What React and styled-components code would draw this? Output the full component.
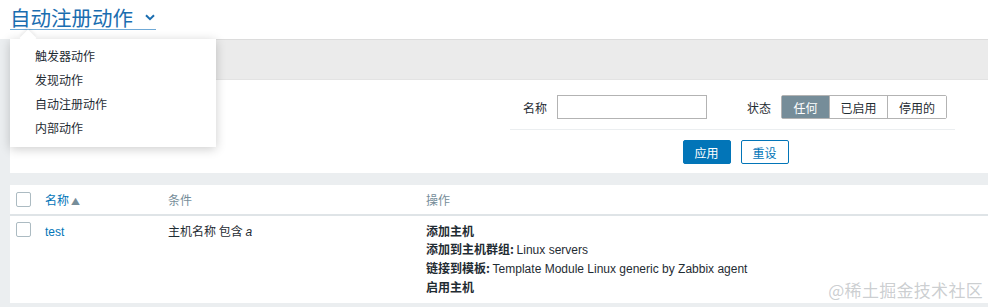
import React from "react";
import styled, { createGlobalStyle } from "styled-components";

const GlobalStyle = createGlobalStyle`
  html, body {
    margin: 0;
    padding: 0;
    background: #ebeef0;
    font-family: "Liberation Sans", Arial, "Noto Sans CJK SC", sans-serif;
    font-size: 12px;
    color: #1f2c33;
  }
`;

const Page = styled.div`
  width: 988px;
  height: 307px;
  overflow: hidden;
  position: relative;
`;

const Header = styled.header`
  position: relative;
  height: 39px;
  background: #fff;
  padding-left: 10px;
  display: flex;
  align-items: flex-start;
`;

const TitleLink = styled.div`
  margin-top: 6px;
  display: flex;
  align-items: center;
  gap: 12px;
  color: #1a6db0;
  font-family: "Noto Sans CJK SC", sans-serif;
  font-size: 20.5px;
  line-height: 22px;
  padding-bottom: 1px;
  border-bottom: 1px solid #6fa9d6;
`;

const Chevron = styled.svg`
  width: 10px;
  height: 7px;
  margin-right: 1px;
`;

const Menu = styled.ul`
  position: absolute;
  top: 39px;
  left: 10px;
  z-index: 5;
  width: 206px;
  margin: 0;
  padding: 5px 0 7px;
  list-style: none;
  background: #fff;
  box-shadow: 0 2px 10px rgba(0, 0, 0, 0.2);

  &::before {
    content: "";
    position: absolute;
    top: -7px;
    left: 12px;
    width: 12px;
    height: 12px;
    background: #fff;
    transform: rotate(45deg);
    box-shadow: -2px -2px 3px rgba(0, 0, 0, 0.06);
  }
`;

const MenuItem = styled.li`
  position: relative;
  padding-left: 25px;
  height: 24px;
  line-height: 24px;
  font-family: "Noto Sans CJK SC", sans-serif;
  font-size: 12px;
  color: #1f2c33;
`;

const Main = styled.main`
  padding-left: 10px;
`;

const Filter = styled.section`
  background: #fff;
`;

const FilterTabs = styled.div`
  height: 39px;
  background: #ebebeb;
  border-top: 1px solid #dcdcdc;
  border-bottom: 1px solid #e3e3e3;
`;

const FilterBody = styled.div`
  height: 93px;
  display: flex;
  flex-direction: column;
  align-items: center;
  padding-left: 500px;
  padding-right: 33px;
`;

const FilterRow = styled.div`
  align-self: stretch;
  display: flex;
  align-items: center;
  padding: 15px 0 10px 13px;
  border-bottom: 1px solid #ebeef0;
`;

const Label = styled.span`
  font-family: "Noto Sans CJK SC", sans-serif;
  font-size: 12px;
  margin-right: 10px;
  margin-left: ${(p) => p.$gap || 0}px;
`;

const TextInput = styled.input`
  box-sizing: border-box;
  width: 150px;
  height: 24px;
  border: 1px solid #b3b3b3;
  padding: 0 5px;
  margin: 0;
`;

const Segments = styled.div`
  display: flex;
  border: 1px solid #b3b3b3;
  border-radius: 2px;
  height: 22px;
`;

const Segment = styled.span`
  display: flex;
  align-items: center;
  justify-content: center;
  width: ${(p) => p.$w}px;
  font-family: "Noto Sans CJK SC", sans-serif;
  font-size: 12px;
  background: ${(p) => (p.$active ? "#768d99" : "#fff")};
  color: ${(p) => (p.$active ? "#fff" : "#1f2c33")};
  & + & {
    border-left: 1px solid #b3b3b3;
  }
`;

const Buttons = styled.div`
  display: flex;
  gap: 10px;
  margin-top: 10px;
  margin-left: 6px;
`;

const Button = styled.button`
  box-sizing: border-box;
  width: 48px;
  height: 24px;
  border-radius: 2px;
  font-family: "Noto Sans CJK SC", sans-serif;
  font-size: 12px;
  padding: 0;
  border: 1px solid #0275b8;
  background: ${(p) => (p.$primary ? "#0275b8" : "#fff")};
  color: ${(p) => (p.$primary ? "#fff" : "#0275b8")};
`;

const Table = styled.table`
  width: 100%;
  margin-top: 12px;
  background: #fff;
  border-collapse: collapse;
`;

const HeadCell = styled.th`
  height: 30px;
  padding: 0;
  padding-left: ${(p) => p.$pl || 0}px;
  width: ${(p) => p.$w || "auto"};
  text-align: left;
  font-weight: normal;
  font-family: "Noto Sans CJK SC", sans-serif;
  font-size: 12px;
  color: ${(p) => (p.$link ? "#0275b8" : "#768d99")};
  border-bottom: 2px solid #dfe4e7;
  box-sizing: border-box;
`;

const Cell = styled.td`
  vertical-align: top;
  padding: 6px 0 7px ${(p) => p.$pl || 0}px;
  line-height: 18px;
  border-bottom: 1px solid #ebeef0;
  font-family: "Noto Sans CJK SC", sans-serif;
  font-size: 12px;
`;

const Check = styled.span`
  display: block;
  box-sizing: border-box;
  width: 15px;
  height: 15px;
  border: 1px solid #acbbc2;
  border-radius: 2px;
  background: #fff;
  margin-top: ${(p) => p.$mt || 0}px;
`;

const Arrow = styled.span`
  font-size: 9px;
  color: #768d99;
  margin-left: 2px;
`;

const Link = styled.span`
  color: #0275b8;
  font-family: "Liberation Sans", Arial, sans-serif;
`;

const Latin = styled.span`
  font-family: "Liberation Sans", Arial, sans-serif;
  font-style: ${(p) => (p.$italic ? "italic" : "normal")};
`;

const OpLine = styled.div`
  b {
    font-weight: bold;
  }
`;

const Watermark = styled.div`
  position: absolute;
  right: 5px;
  bottom: 5px;
  font-family: "Noto Sans CJK SC", sans-serif;
  font-size: 17px;
  color: rgba(160, 165, 170, 0.55);
  letter-spacing: 0.3px;
`;

const menuItems = ["触发器动作", "发现动作", "自动注册动作", "内部动作"];

export default function App() {
  return (
    <Page>
      <GlobalStyle />
      <Header>
        <TitleLink>
          自动注册动作
          <Chevron viewBox="0 0 10 7">
            <path d="M1 1.2 L5 5.2 L9 1.2" fill="none" stroke="#1a6db0" strokeWidth="2" />
          </Chevron>
        </TitleLink>
        <Menu>
          {menuItems.map((m) => (
            <MenuItem key={m}>{m}</MenuItem>
          ))}
        </Menu>
      </Header>
      <Main>
        <Filter>
          <FilterTabs />
          <FilterBody>
            <FilterRow>
              <Label>名称</Label>
              <TextInput />
              <Label $gap={40}>状态</Label>
              <Segments>
                <Segment $w={47} $active>任何</Segment>
                <Segment $w={57}>已启用</Segment>
                <Segment $w={58}>停用的</Segment>
              </Segments>
            </FilterRow>
            <Buttons>
              <Button $primary>应用</Button>
              <Button>重设</Button>
            </Buttons>
          </FilterBody>
        </Filter>
        <Table>
          <thead>
            <tr>
              <HeadCell $w="35px" $pl={6}>
                <Check />
              </HeadCell>
              <HeadCell $w="123px" $link>
                名称<Arrow>▲</Arrow>
              </HeadCell>
              <HeadCell $w="258px">条件</HeadCell>
              <HeadCell>操作</HeadCell>
            </tr>
          </thead>
          <tbody>
            <tr>
              <Cell $pl={6}>
                <Check $mt={0} />
              </Cell>
              <Cell>
                <Link>test</Link>
              </Cell>
              <Cell>
                主机名称 包含 <Latin $italic>a</Latin>
              </Cell>
              <Cell>
                <OpLine><b>添加主机</b></OpLine>
                <OpLine><b>添加到主机群组:</b> <Latin>Linux servers</Latin></OpLine>
                <OpLine><b>链接到模板:</b> <Latin>Template Module Linux generic by Zabbix agent</Latin></OpLine>
                <OpLine><b>启用主机</b></OpLine>
              </Cell>
            </tr>
          </tbody>
        </Table>
      </Main>
      <Watermark>@稀土掘金技术社区</Watermark>
    </Page>
  );
}
